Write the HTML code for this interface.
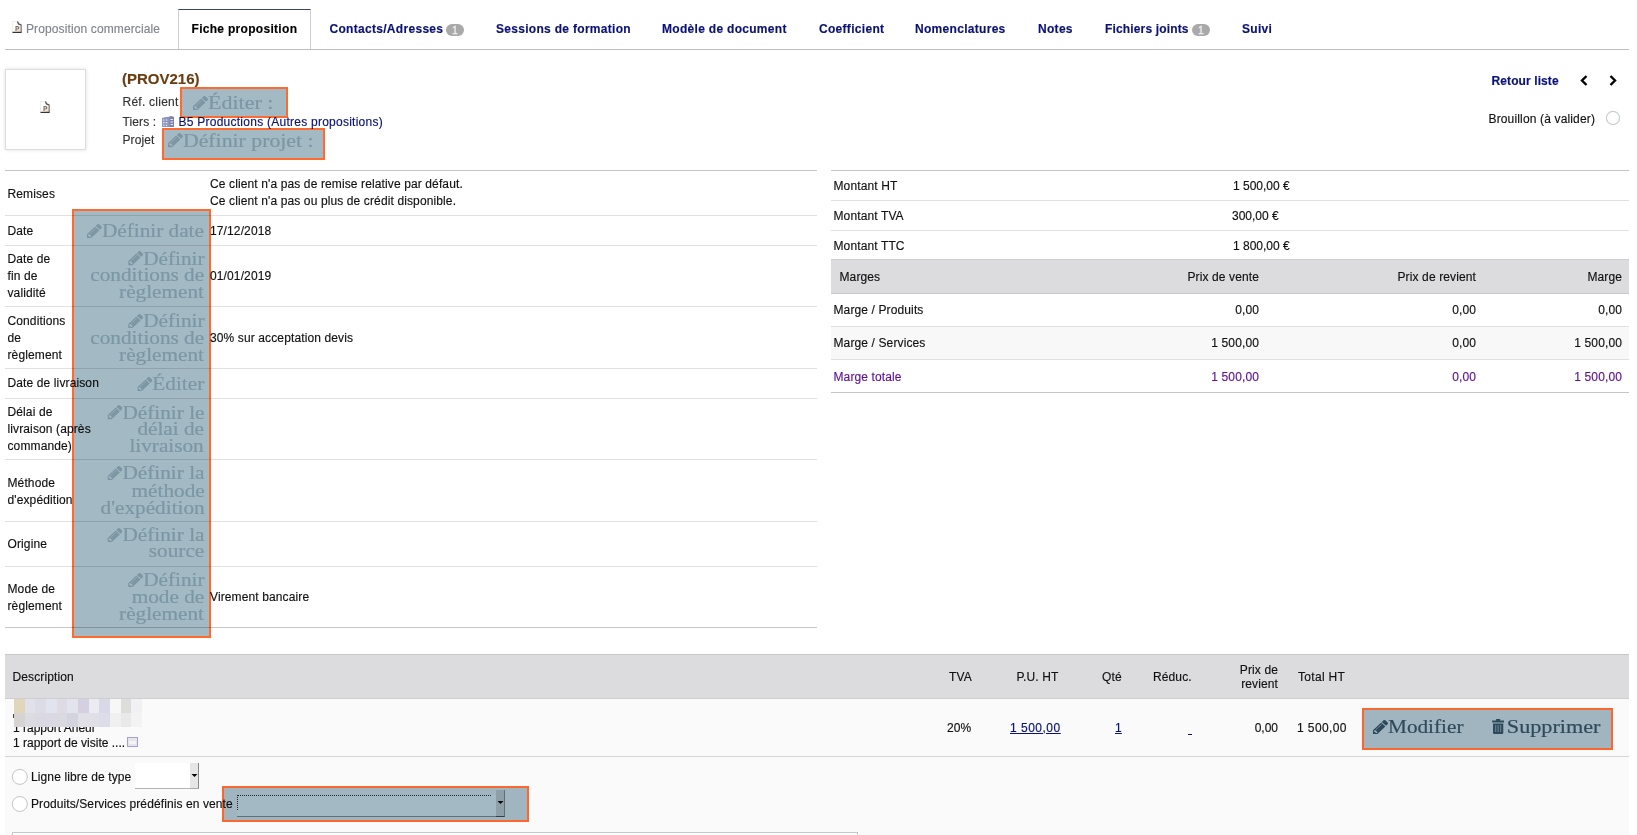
<!DOCTYPE html>
<html><head><meta charset="utf-8">
<style>
html,body{margin:0;padding:0;background:#fff;width:1637px;height:835px;overflow:hidden;position:relative}
body{font-family:"Liberation Sans",sans-serif;font-size:12px;color:#222}
.t{position:absolute;white-space:nowrap;line-height:0;font-size:12px;letter-spacing:.12px;color:#111;-webkit-text-stroke:.15px currentColor}
.b{font-weight:bold}
.nav{color:#0a1274}
.r{text-align:right}
.hl{position:absolute;height:1px;background:#e0e0e0}
.hd{position:absolute;height:1px;background:#c6c6c6}
.box{position:absolute}
.ov{position:absolute;box-sizing:border-box;border:2px solid #ff6a2e;background:#a3b9c4;mix-blend-mode:multiply}
.s{position:absolute;white-space:nowrap;line-height:0;font-family:"Liberation Serif",serif;font-size:18.5px;color:#c3cfd4;transform-origin:100% 50%;transform:scaleX(1.148);-webkit-text-stroke:.18px currentColor}
.sl{transform-origin:0 50%}
.pi{position:relative;display:inline-block;vertical-align:-1px;fill:currentColor;margin-top:-16px}
.dk{color:#486675}
.badge{position:absolute;background:#a9a9a9;border-radius:6px;color:#eee;font-size:10.5px;line-height:12.5px;text-align:center;-webkit-text-stroke:.3px #eee}
svg{position:absolute}
</style></head><body>

<!-- ================= TABS ================= -->
<div class="hd" style="left:5px;top:49px;width:1624px;background:#bfbfbf"></div>
<div class="box" style="left:178px;top:9px;width:131px;border:1px solid #cfcfcf;border-top:1px solid #3a4466;border-bottom:none;background:#fff;box-sizing:content-box;height:39px"></div>
<svg style="left:12px;top:21px" width="10" height="12" viewBox="0 0 10 12"><defs><linearGradient id="pg" x1="0" y1="0" x2="1" y2="1"><stop offset="0.45" stop-color="#fff"/><stop offset="1" stop-color="#f2c8a0"/></linearGradient></defs><path d="M0.5 0.5h5.5l3 3v8h-8.5z" fill="url(#pg)" stroke="#e4e4e4" stroke-width=".6"/><path d="M5.5 0.5l1 2.5 2.5 0.8" fill="none" stroke="#555" stroke-width="1.4"/><path d="M9.2 3.5v8" stroke="#666" stroke-width="1"/><path d="M0.5 11.4h9" stroke="#333" stroke-width="1.2"/><path d="M4 10V5.6h1.6q1.2 0 1.2 1.2t-1.2 1.2H4" fill="none" stroke="#777" stroke-width="1.1"/></svg>
<div class="t" style="left:26px;top:28.8px;color:#80858f">Proposition commerciale</div>
<div class="t b" style="left:191.5px;top:28.8px;letter-spacing:.3px;color:#000">Fiche proposition</div>
<div class="t b nav" style="left:329.5px;top:28.8px;letter-spacing:.3px">Contacts/Adresses</div>
<div class="badge" style="left:446px;top:24px;width:18px;height:12px">1</div>
<div class="t b nav" style="left:496px;top:28.8px;letter-spacing:.3px">Sessions de formation</div>
<div class="t b nav" style="left:662px;top:28.8px;letter-spacing:.3px">Modèle de document</div>
<div class="t b nav" style="left:819px;top:28.8px;letter-spacing:.3px">Coefficient</div>
<div class="t b nav" style="left:915px;top:28.8px;letter-spacing:.3px">Nomenclatures</div>
<div class="t b nav" style="left:1038px;top:28.8px;letter-spacing:.3px">Notes</div>
<div class="t b nav" style="left:1105px;top:28.8px;letter-spacing:.15px">Fichiers joints</div>
<div class="badge" style="left:1192px;top:24px;width:18px;height:12px">1</div>
<div class="t b nav" style="left:1242px;top:28.8px;letter-spacing:.3px">Suivi</div>

<!-- ================= HEADER ================= -->
<div class="box" style="left:5px;top:69px;width:79px;height:79px;border:1px solid #ddd;box-shadow:0 0 4px rgba(0,0,0,.12);background:#fff"></div>
<svg style="left:40px;top:101px" width="10" height="12" viewBox="0 0 10 12"><path d="M0.5 0.5h5.5l3 3v8h-8.5z" fill="url(#pg)" stroke="#e4e4e4" stroke-width=".6"/><path d="M5.5 0.5l1 2.5 2.5 0.8" fill="none" stroke="#555" stroke-width="1.4"/><path d="M9.2 3.5v8" stroke="#666" stroke-width="1"/><path d="M0.5 11.4h9" stroke="#333" stroke-width="1.2"/><path d="M4 10V5.6h1.6q1.2 0 1.2 1.2t-1.2 1.2H4" fill="none" stroke="#777" stroke-width="1.1"/></svg>
<div class="t b" style="left:122px;top:78.5px;font-size:15px;letter-spacing:0;color:#6b3d10">(PROV216)</div>
<div class="t" style="left:122.5px;top:101.6px;color:#333;letter-spacing:.25px">Réf. client</div>
<div class="t" style="left:122.5px;top:121.8px;color:#333">Tiers :</div>
<svg style="left:162px;top:116px" width="12" height="11" viewBox="0 0 12 11"><path d="M0 2q2-1 7-1.2q0-.8 2.5-.8q2.5 0 2.5 2V11H0z" fill="#8e94bc"/><rect x="7.5" y="1" width="4.5" height="10" fill="#7a82ad"/><path d="M1 4h1.5M3.8 4h1.5M1 6.6h1.5M3.8 6.6h1.5M1 9.3h1.5M3.8 9.3h1.5M8.5 3.5h2.5M8.5 6h2.5M8.5 8.5h2.5" stroke="#e8eaf6" stroke-width="1.1"/></svg>
<div class="t nav" style="left:178.5px;top:121.8px;letter-spacing:.25px">B5 Productions (Autres propositions)</div>
<div class="t" style="left:122.5px;top:139.5px;color:#333">Projet</div>

<div class="t b nav" style="left:1491.5px;top:80.5px;letter-spacing:.1px">Retour liste</div>
<svg style="left:1580px;top:75px" width="8" height="11" viewBox="0 0 8 11"><path d="M6.5 1L2 5.5 6.5 10" fill="none" stroke="#000" stroke-width="2.4"/></svg>
<svg style="left:1609px;top:75px" width="8" height="11" viewBox="0 0 8 11"><path d="M1.5 1L6 5.5 1.5 10" fill="none" stroke="#000" stroke-width="2.4"/></svg>
<div class="t" style="left:1488.5px;top:118.5px;letter-spacing:.15px">Brouillon (à valider)</div>
<svg style="left:1605px;top:110px" width="16" height="16" viewBox="0 0 16 16"><circle cx="8" cy="8" r="6.6" fill="none" stroke="#c9cfcf" stroke-width="1.2"/></svg>

<!-- ================= LEFT TABLE ================= -->
<div class="hd" style="left:5px;top:170px;width:812px"></div>
<div class="hl" style="left:5px;top:215px;width:812px"></div>
<div class="hl" style="left:5px;top:245px;width:812px"></div>
<div class="hl" style="left:5px;top:306px;width:812px"></div>
<div class="hl" style="left:5px;top:368px;width:812px"></div>
<div class="hl" style="left:5px;top:398px;width:812px"></div>
<div class="hl" style="left:5px;top:459px;width:812px"></div>
<div class="hl" style="left:5px;top:521px;width:812px"></div>
<div class="hl" style="left:5px;top:566px;width:812px"></div>
<div class="hd" style="left:5px;top:627px;width:812px"></div>

<div class="t" style="left:7.5px;top:193.5px">Remises</div>
<div class="t" style="left:210px;top:184.3px">Ce client n'a pas de remise relative par défaut.</div>
<div class="t" style="left:210px;top:201.3px">Ce client n'a pas ou plus de crédit disponible.</div>
<div class="t" style="left:7.5px;top:230.5px">Date</div>
<div class="t" style="left:210px;top:230.5px">17/12/2018</div>
<div class="t" style="left:7.5px;top:259.2px">Date de</div>
<div class="t" style="left:7.5px;top:276px">fin de</div>
<div class="t" style="left:7.5px;top:293.4px">validité</div>
<div class="t" style="left:210px;top:276.2px">01/01/2019</div>
<div class="t" style="left:7.5px;top:320.6px">Conditions</div>
<div class="t" style="left:7.5px;top:337.6px">de</div>
<div class="t" style="left:7.5px;top:354.6px">règlement</div>
<div class="t" style="left:210px;top:337.6px">30% sur acceptation devis</div>
<div class="t" style="left:7.5px;top:383.4px">Date de livraison</div>
<div class="t" style="left:7.5px;top:411.8px">Délai de</div>
<div class="t" style="left:7.5px;top:428.8px">livraison (après</div>
<div class="t" style="left:7.5px;top:445.8px">commande)</div>
<div class="t" style="left:7.5px;top:483.4px">Méthode</div>
<div class="t" style="left:7.5px;top:500.4px">d'expédition</div>
<div class="t" style="left:7.5px;top:544.2px">Origine</div>
<div class="t" style="left:7.5px;top:589.2px">Mode de</div>
<div class="t" style="left:7.5px;top:606.2px">règlement</div>
<div class="t" style="left:210px;top:597px">Virement bancaire</div>

<!-- ================= RIGHT TABLE ================= -->
<div class="hd" style="left:831px;top:170px;width:798px"></div>
<div class="hl" style="left:831px;top:200px;width:798px"></div>
<div class="hl" style="left:831px;top:230px;width:798px"></div>
<div class="box" style="left:831px;top:259px;width:798px;height:34px;background:#dcdcdf;border-top:1px solid #cfcfd2;box-sizing:border-box"></div>
<div class="hd" style="left:831px;top:293px;width:798px;background:#c8c8c8"></div>
<div class="hl" style="left:831px;top:326px;width:798px"></div>
<div class="box" style="left:831px;top:327px;width:798px;height:32px;background:#f8f8f8"></div>
<div class="hl" style="left:831px;top:359px;width:798px"></div>
<div class="hd" style="left:831px;top:392px;width:798px"></div>

<div class="t" style="left:833.5px;top:185.8px">Montant HT</div>
<div class="t" style="left:1233px;top:185.8px;letter-spacing:0">1 500,00 €</div>
<div class="t" style="left:833.5px;top:215.8px">Montant TVA</div>
<div class="t" style="left:1232px;top:215.8px;letter-spacing:0">300,00 €</div>
<div class="t" style="left:833.5px;top:245.8px">Montant TTC</div>
<div class="t" style="left:1233px;top:245.8px;letter-spacing:0">1 800,00 €</div>
<div class="t" style="left:839.5px;top:276.8px">Marges</div>
<div class="t r" style="right:378px;top:276.8px">Prix de vente</div>
<div class="t r" style="right:161px;top:276.8px">Prix de revient</div>
<div class="t r" style="right:15px;top:276.8px">Marge</div>
<div class="t" style="left:833.5px;top:310.2px">Marge / Produits</div>
<div class="t r" style="right:378px;top:310.2px">0,00</div>
<div class="t r" style="right:161px;top:310.2px">0,00</div>
<div class="t r" style="right:15px;top:310.2px">0,00</div>
<div class="t" style="left:833.5px;top:343.2px">Marge / Services</div>
<div class="t r" style="right:378px;top:343.2px">1 500,00</div>
<div class="t r" style="right:161px;top:343.2px">0,00</div>
<div class="t r" style="right:15px;top:343.2px">1 500,00</div>
<div class="t" style="left:833.5px;top:377px;color:#5e1292">Marge totale</div>
<div class="t r" style="right:378px;top:377px;color:#5e1292">1 500,00</div>
<div class="t r" style="right:161px;top:377px;color:#5e1292">0,00</div>
<div class="t r" style="right:15px;top:377px;color:#5e1292">1 500,00</div>

<!-- ================= LINES TABLE ================= -->
<div class="box" style="left:5px;top:654px;width:1624px;height:45px;background:#dcdcdf;border-top:1px solid #c8c8cc;box-sizing:border-box"></div>
<div class="box" style="left:5px;top:698px;width:1624px;height:137px;background:#fafafa"></div>
<div class="hd" style="left:5px;top:698px;width:1624px;background:#cfcfcf"></div>
<div class="hl" style="left:5px;top:756px;width:1624px;background:#d5d5d5"></div>

<div class="t" style="left:12.5px;top:676.6px">Description</div>
<div class="t" style="left:949px;top:677px">TVA</div>
<div class="t" style="left:1016.5px;top:677px">P.U. HT</div>
<div class="t" style="left:1102px;top:677px">Qté</div>
<div class="t" style="left:1153px;top:677px">Réduc.</div>
<div class="t r" style="right:359px;top:669.7px">Prix de</div>
<div class="t r" style="right:359px;top:683.6px">revient</div>
<div class="t" style="left:1298px;top:677px;letter-spacing:.3px">Total HT</div>

<div class="t" style="left:947px;top:727.5px">20%</div>
<div class="t nav" style="left:1010px;top:727.5px;text-decoration:underline;letter-spacing:.5px">1 500,00</div>
<div class="t nav" style="left:1115px;top:727.5px;text-decoration:underline">1</div>
<div class="box" style="left:1188px;top:734px;width:4px;height:1px;background:#0a1464"></div>
<div class="t r" style="right:359px;top:727.5px;letter-spacing:0">0,00</div>
<div class="t" style="left:1297px;top:727.5px;letter-spacing:.4px">1 500,00</div>

<!-- description text + mosaic -->
<div class="t" style="left:13px;top:728px;letter-spacing:0">1 rapport Aneur</div>
<div class="t" style="left:13px;top:742.5px;letter-spacing:0">1 rapport de visite ....</div>
<div class="box" style="left:127px;top:737px;width:11px;height:10px;border:1px solid #a0a0e0;background:#e6e6e6;box-sizing:border-box"><div style="position:absolute;left:1px;top:3px;width:7px;height:3px;background:#f4f4f4"></div></div>
<div class="box" style="left:13px;top:714px;width:3px;height:4px;background:#444"></div>
<div class="box" style="left:14px;top:699px;width:128px;height:27.8px;display:grid;grid-template-columns:repeat(12,1fr);grid-template-rows:1fr 1fr">
<div style="background:#e0d6bc"></div><div style="background:#e1e1ec"></div><div style="background:#dcdce6"></div><div style="background:#e1e4ee"></div><div style="background:#dedbe6"></div><div style="background:#e3e3ee"></div><div style="background:#d4d0e2"></div><div style="background:#ebebf1"></div><div style="background:#d8d8e6"></div><div style="background:#f7f7f7"></div><div style="background:#dddddb"></div><div style="background:#f1f1f4"></div>
<div style="background:#d7d3d2"></div><div style="background:#dcdbe2"></div><div style="background:#d9d8e3"></div><div style="background:#d9d8e3"></div><div style="background:#dad8e1"></div><div style="background:#d4d3e0"></div><div style="background:#e1e0e6"></div><div style="background:#e0dfe8"></div><div style="background:#dddce9"></div><div style="background:#f0f0f0"></div><div style="background:#e9e9e9"></div><div style="background:#f3f3f3"></div>
</div>

<!-- add line form -->
<svg style="left:11px;top:768px" width="18" height="18" viewBox="0 0 18 18"><circle cx="8.8" cy="8.9" r="7.5" fill="#fff" stroke="#c4c4c4" stroke-width="1"/></svg>
<svg style="left:11px;top:795px" width="18" height="18" viewBox="0 0 18 18"><circle cx="8.8" cy="9" r="7.5" fill="#fff" stroke="#c4c4c4" stroke-width="1"/></svg>
<div class="t" style="left:31px;top:777px">Ligne libre de type</div>
<div class="box" style="left:135px;top:763px;width:64px;height:26px;background:#fff;border-bottom:1px solid #b4b4b4;box-sizing:border-box"></div>
<div class="box" style="left:190px;top:763px;width:9px;height:26px;background:#e6e6e6;border-right:1px solid #888;border-bottom:1px solid #aaa;box-sizing:border-box"></div>
<svg style="left:191px;top:773px" width="7" height="5" viewBox="0 0 7 5"><path d="M0.5 1h6l-3 3z" fill="#000"/></svg>
<div class="t" style="left:31px;top:804px;letter-spacing:.1px">Produits/Services prédéfinis en vente</div>
<div class="box" style="left:237px;top:795px;width:268px;height:22px;border-bottom:1px solid #444;box-sizing:border-box;background:#fff"></div>
<div class="box" style="left:237px;top:795px;width:254px;height:1px;border-top:1px dotted #333"></div>
<div class="box" style="left:237px;top:795px;width:1px;height:15px;border-left:1px dotted #333"></div>
<div class="box" style="left:237px;top:816px;width:268px;height:1px;background:#999"></div>
<div class="box" style="left:496px;top:790px;width:9px;height:27px;background:#ddd;border-right:1px solid #999;border-bottom:1px solid #555;box-sizing:border-box"></div>
<svg style="left:497px;top:800px" width="7" height="5" viewBox="0 0 7 5"><path d="M0.5 1h6l-3 3z" fill="#000"/></svg>
<div class="box" style="left:12px;top:832px;width:844px;height:10px;border:1px solid #c8c8c8;background:#fff"></div>

<!-- OVT_START -->
<svg width="0" height="0" style="position:absolute;left:0;top:0"><defs><path id="pen" d="M363 1536l91-91-235-235-91 91v107h128v128h107zm523-928q0-22-22-22-10 0-17 7l-542 542q-7 7-7 17 0 22 22 22 10 0 17-7l542-542q7-7 7-17zm-54-192l416 416-832 832h-416v-416zm683 96q0 53-37 90l-166 166-416-416 166-165q36-38 90-38 53 0 91 38l235 234q37 39 37 91z"/></defs></svg>
<div class="s" style="right:1432.8px;top:231.06px"><svg class="pi" width="13.07" height="14.3" viewBox="0 149 1515 1515" preserveAspectRatio="none"><use href="#pen"/></svg>Définir date</div>
<div class="s" style="right:1432.8px;top:258.66px"><svg class="pi" width="13.07" height="14.3" viewBox="0 149 1515 1515" preserveAspectRatio="none"><use href="#pen"/></svg>Définir</div>
<div class="s" style="right:1432.8px;top:275.46px">conditions de</div>
<div class="s" style="right:1432.8px;top:292.26px">règlement</div>
<div class="s" style="right:1432.8px;top:320.86px"><svg class="pi" width="13.07" height="14.3" viewBox="0 149 1515 1515" preserveAspectRatio="none"><use href="#pen"/></svg>Définir</div>
<div class="s" style="right:1432.8px;top:337.86px">conditions de</div>
<div class="s" style="right:1432.8px;top:354.86px">règlement</div>
<div class="s" style="right:1432.8px;top:384.16px"><svg class="pi" width="13.07" height="14.3" viewBox="0 149 1515 1515" preserveAspectRatio="none"><use href="#pen"/></svg>Éditer</div>
<div class="s" style="right:1432.8px;top:412.56px"><svg class="pi" width="13.07" height="14.3" viewBox="0 149 1515 1515" preserveAspectRatio="none"><use href="#pen"/></svg>Définir le</div>
<div class="s" style="right:1432.8px;top:429.06px">délai de</div>
<div class="s" style="right:1432.8px;top:445.56px">livraison</div>
<div class="s" style="right:1432.8px;top:473.36px"><svg class="pi" width="13.07" height="14.3" viewBox="0 149 1515 1515" preserveAspectRatio="none"><use href="#pen"/></svg>Définir la</div>
<div class="s" style="right:1432.8px;top:491.06px">méthode</div>
<div class="s" style="right:1432.8px;top:507.56px">d'expédition</div>
<div class="s" style="right:1432.8px;top:535.36px"><svg class="pi" width="13.07" height="14.3" viewBox="0 149 1515 1515" preserveAspectRatio="none"><use href="#pen"/></svg>Définir la</div>
<div class="s" style="right:1432.8px;top:551.16px">source</div>
<div class="s" style="right:1432.8px;top:580.26px"><svg class="pi" width="13.07" height="14.3" viewBox="0 149 1515 1515" preserveAspectRatio="none"><use href="#pen"/></svg>Définir</div>
<div class="s" style="right:1432.8px;top:597.36px">mode de</div>
<div class="s" style="right:1432.8px;top:614.36px">règlement</div>
<div class="s sl" style="left:192.8px;top:103.16px;transform:scaleX(1.189)"><svg class="pi" width="12.61" height="14.3" viewBox="0 149 1515 1515" preserveAspectRatio="none"><use href="#pen"/></svg>Éditer :</div>
<div class="s sl" style="left:168px;top:140.76px;transform:scaleX(1.176)"><svg class="pi" width="12.76" height="14.3" viewBox="0 149 1515 1515" preserveAspectRatio="none"><use href="#pen"/></svg>Définir projet :</div>
<div class="s sl dk" style="left:1372.8px;top:727.36px"><svg class="pi" width="13.07" height="14.3" viewBox="0 149 1515 1515" preserveAspectRatio="none"><use href="#pen"/></svg>Modifier</div>
<div class="s sl dk" style="left:1492px;top:727.36px;transform:scaleX(1.2)"><svg class="pi" width="10.25" style="margin-right:2.08px" height="15" viewBox="0 0 12 15" preserveAspectRatio="none"><path d="M4 0h4v1.6h3.8v2H0.2v-2H4z M1 4.5h10v9.3q0 1.2-1.2 1.2H2.2Q1 15 1 13.8z" /><path d="M3.6 6v7M6 6v7M8.4 6v7" stroke="#a3b9c4" stroke-width="1"/></svg>Supprimer</div>
<!-- OVT_END -->
<!-- ================= OVERLAYS ================= -->
<div class="ov" style="left:180.3px;top:86.6px;width:107.3px;height:31.8px"></div>
<div class="ov" style="left:162.4px;top:127.6px;width:162.8px;height:32.6px"></div>
<div class="ov" style="left:72.3px;top:209.4px;width:138.4px;height:428.6px"></div>
<div class="ov" style="left:1362px;top:707.5px;width:250.5px;height:42px"></div>
<div class="ov" style="left:221.5px;top:786px;width:307px;height:35.5px"></div>

</body></html>
